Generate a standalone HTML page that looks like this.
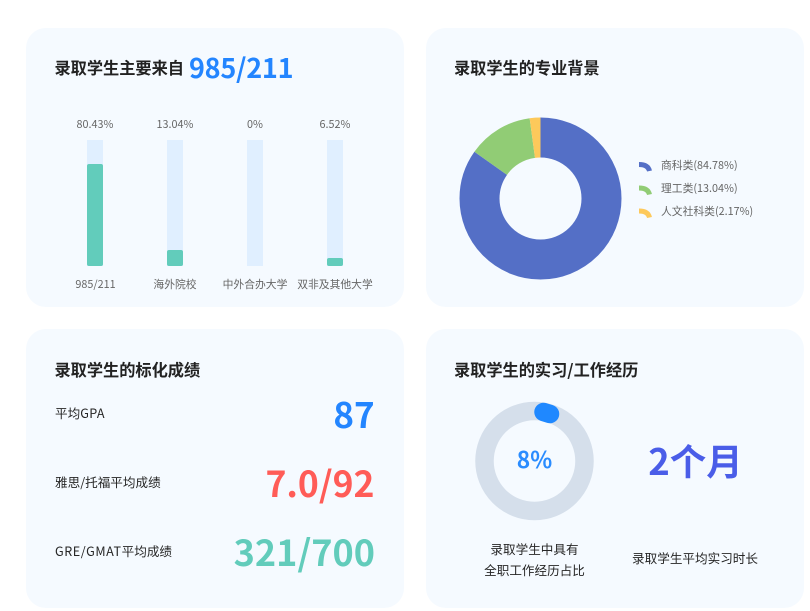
<!DOCTYPE html>
<html lang="zh"><head><meta charset="utf-8"><title>录取学生</title>
<style>
html,body{margin:0;padding:0;background:#fff;width:810px;height:611px;overflow:hidden}
body{position:relative;font-family:"Noto Sans CJK SC","Liberation Sans",sans-serif;color:#222}
.card{position:absolute;width:378px;height:279px;background:#f5faff;border-radius:20px}
.t{position:absolute;white-space:nowrap;line-height:20px;height:20px}
.c{text-align:center}
.r{text-align:right}
.h{font-size:16.2px;font-weight:700;color:#222}
.s{font-size:10.8px;color:#666}
.m{font-size:12.6px;color:#262626}
.l{font-size:10.8px;color:#666}
.b{font-weight:700}
.w{letter-spacing:.35px}
.track{position:absolute;width:16px;top:140px;height:126px;background:#e0efff}
.fill{position:absolute;width:16px;background:#62ccbb;border-radius:2px}
svg{position:absolute;left:0;top:0}
</style></head><body>
<div class="card" style="left:26px;top:28px"></div>
<div class="card" style="left:426px;top:28px"></div>
<div class="card" style="left:26px;top:329px"></div>
<div class="card" style="left:426px;top:329px"></div>

<div class="t h" style="left:54.500px;top:57px">录取学生主要来自</div>
<div class="t b" style="left:189px;top:56.500px;font-size:27px;letter-spacing:-.25px;color:#2385ff">985/211</div>

<div class="t s c" style="left:55px;width:80px;top:114px">80.43%</div>
<div class="t s c" style="left:135px;width:80px;top:114px">13.04%</div>
<div class="t s c" style="left:215px;width:80px;top:114px">0%</div>
<div class="t s c" style="left:295px;width:80px;top:114px">6.52%</div>

<div class="track" style="left:87px"></div>
<div class="track" style="left:167px"></div>
<div class="track" style="left:247px"></div>
<div class="track" style="left:327px"></div>
<div class="fill" style="left:87px;top:164px;height:102px"></div>
<div class="fill" style="left:167px;top:250px;height:16px"></div>
<div class="fill" style="left:327px;top:258px;height:8px"></div>

<div class="t s c" style="left:55.500px;width:80px;top:274px">985/211</div>
<div class="t s c" style="left:135px;width:80px;top:274px">海外院校</div>
<div class="t s c" style="left:215px;width:80px;top:274px">中外合办大学</div>
<div class="t s c" style="left:295px;width:80px;top:274px">双非及其他大学</div>

<div class="t h" style="left:454px;top:57px">录取学生的专业背景</div>

<svg width="810" height="611" viewBox="0 0 810 611">
  <g fill="none" stroke-width="40" transform="rotate(-90 540.5 198.5)">
    <circle cx="540.5" cy="198.5" r="61" stroke="#546fc6" stroke-dasharray="324.9 383.3"/>
    <circle cx="540.5" cy="198.5" r="61" stroke="#91cc75" stroke-dasharray="50 383.3" stroke-dashoffset="-324.9"/>
    <circle cx="540.5" cy="198.5" r="61" stroke="#fdc95b" stroke-dasharray="8.4 383.3" stroke-dashoffset="-374.9"/>
  </g>
  <g fill="none" stroke-width="5">
    <path d="M639 164.5Q648 164.5 649.5 171" stroke="#546fc6"/>
    <path d="M639 188Q648 188 649.5 194.5" stroke="#91cc75"/>
    <path d="M639 211Q648 211 649.500 217.500" stroke="#fdc95b"/>
  </g>
  <circle cx="534.500" cy="461" r="50" fill="none" stroke="#d5dfeb" stroke-width="18.500"/>
  <path d="M543.500 412L550 414" fill="none" stroke="#1f88ff" stroke-width="18.500" stroke-linecap="round"/>
</svg>

<div class="t l" style="left:661px;top:155px">商科类(84.78%)</div>
<div class="t l" style="left:661px;top:178px">理工类(13.04%)</div>
<div class="t l" style="left:661px;top:201px">人文社科类(2.17%)</div>

<div class="t h" style="left:54.500px;top:359px">录取学生的标化成绩</div>
<div class="t m" style="left:55px;top:403px">平均<span class="w">GPA</span></div>
<div class="t m" style="left:55px;top:472px">雅思/托福平均成绩</div>
<div class="t m" style="left:55px;top:541px"><span style="letter-spacing:.55px">GRE/GMAT</span>平均成绩</div>
<div class="t b r" style="right:435.500px;top:403.500px;font-size:35px;letter-spacing:-.1px;color:#2385ff">87</div>
<div class="t b r" style="right:435.500px;top:472.500px;font-size:35.500px;color:#ff5c57">7.0/92</div>
<div class="t b r" style="right:435px;top:541px;font-size:36px;color:#62ccbb">321/700</div>

<div class="t h" style="left:454px;top:359px">录取学生的实习/工作经历</div>
<div class="t b c" style="left:494.500px;width:80px;top:448.500px;font-size:22.800px;color:#2a8cff">8%</div>
<div class="t b c" style="left:635.500px;width:120px;top:450px;font-size:36.500px;color:#4a5de8">2个月</div>
<div class="t m c" style="left:474.500px;width:120px;top:539px">录取学生中具有</div>
<div class="t m c" style="left:474.500px;width:120px;top:560px">全职工作经历占比</div>
<div class="t m c" style="left:625px;width:140px;top:548px">录取学生平均实习时长</div>
</body></html>
